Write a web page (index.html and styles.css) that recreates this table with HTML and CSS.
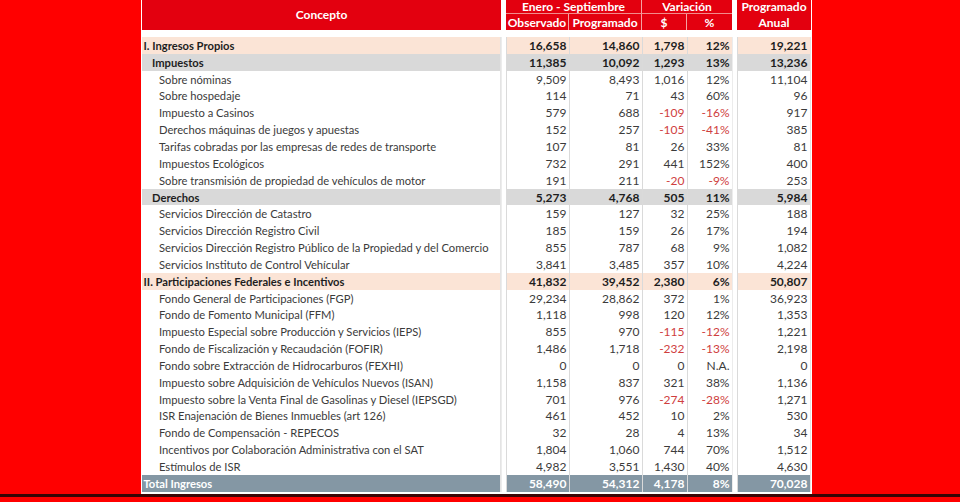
FILE: index.html
```html
<!DOCTYPE html>
<html lang="es">
<head>
<meta charset="utf-8">
<link rel="stylesheet" href="styles.css">
</head>
<body>
<div class="page">
  <div class="frame">
    <div class="head">
      <div class="h-concepto">Concepto</div>
      <i class="gap g1"></i>
      <div class="h-group h-enero">Enero - Septiembre</div>
      <div class="h-group h-var">Variación</div>
      <div class="h-sub h-obs">Observado</div>
      <div class="h-sub h-prog">Programado</div>
      <div class="h-sub h-dol">$</div>
      <div class="h-sub h-pct">%</div>
      <i class="gap g2"></i>
      <div class="h-anual">Programado<br>Anual</div>
    </div>
    <div class="body">
      <div class="row peach bold"><div class="c l0">I. Ingresos Propios</div><i></i><div class="n">16,658</div><div class="n">14,860</div><div class="n">1,798</div><div class="n">12%</div><i></i><div class="n a">19,221</div></div>
      <div class="row grey bold"><div class="c l1">Impuestos</div><i></i><div class="n">11,385</div><div class="n">10,092</div><div class="n">1,293</div><div class="n">13%</div><i></i><div class="n a">13,236</div></div>
      <div class="row"><div class="c l2">Sobre nóminas</div><i></i><div class="n">9,509</div><div class="n">8,493</div><div class="n">1,016</div><div class="n">12%</div><i></i><div class="n a">11,104</div></div>
      <div class="row"><div class="c l2">Sobre hospedaje</div><i></i><div class="n">114</div><div class="n">71</div><div class="n">43</div><div class="n">60%</div><i></i><div class="n a">96</div></div>
      <div class="row"><div class="c l2">Impuesto a Casinos</div><i></i><div class="n">579</div><div class="n">688</div><div class="n neg">-109</div><div class="n neg">-16%</div><i></i><div class="n a">917</div></div>
      <div class="row"><div class="c l2">Derechos máquinas de juegos y apuestas</div><i></i><div class="n">152</div><div class="n">257</div><div class="n neg">-105</div><div class="n neg">-41%</div><i></i><div class="n a">385</div></div>
      <div class="row"><div class="c l2">Tarifas cobradas por las empresas de redes de transporte</div><i></i><div class="n">107</div><div class="n">81</div><div class="n">26</div><div class="n">33%</div><i></i><div class="n a">81</div></div>
      <div class="row"><div class="c l2">Impuestos Ecológicos</div><i></i><div class="n">732</div><div class="n">291</div><div class="n">441</div><div class="n">152%</div><i></i><div class="n a">400</div></div>
      <div class="row"><div class="c l2">Sobre transmisión de propiedad de vehículos de motor</div><i></i><div class="n">191</div><div class="n">211</div><div class="n neg">-20</div><div class="n neg">-9%</div><i></i><div class="n a">253</div></div>
      <div class="row grey bold"><div class="c l1">Derechos</div><i></i><div class="n">5,273</div><div class="n">4,768</div><div class="n">505</div><div class="n">11%</div><i></i><div class="n a">5,984</div></div>
      <div class="row"><div class="c l2">Servicios Dirección de Catastro</div><i></i><div class="n">159</div><div class="n">127</div><div class="n">32</div><div class="n">25%</div><i></i><div class="n a">188</div></div>
      <div class="row"><div class="c l2">Servicios Dirección Registro Civil</div><i></i><div class="n">185</div><div class="n">159</div><div class="n">26</div><div class="n">17%</div><i></i><div class="n a">194</div></div>
      <div class="row"><div class="c l2">Servicios Dirección Registro Público de la Propiedad y del Comercio</div><i></i><div class="n">855</div><div class="n">787</div><div class="n">68</div><div class="n">9%</div><i></i><div class="n a">1,082</div></div>
      <div class="row"><div class="c l2">Servicios Instituto de Control Vehícular</div><i></i><div class="n">3,841</div><div class="n">3,485</div><div class="n">357</div><div class="n">10%</div><i></i><div class="n a">4,224</div></div>
      <div class="row peach bold"><div class="c l0">II. Participaciones Federales e Incentivos</div><i></i><div class="n">41,832</div><div class="n">39,452</div><div class="n">2,380</div><div class="n">6%</div><i></i><div class="n a">50,807</div></div>
      <div class="row"><div class="c l2">Fondo General de Participaciones (FGP)</div><i></i><div class="n">29,234</div><div class="n">28,862</div><div class="n">372</div><div class="n">1%</div><i></i><div class="n a">36,923</div></div>
      <div class="row"><div class="c l2">Fondo de Fomento Municipal (FFM)</div><i></i><div class="n">1,118</div><div class="n">998</div><div class="n">120</div><div class="n">12%</div><i></i><div class="n a">1,353</div></div>
      <div class="row"><div class="c l2">Impuesto Especial sobre Producción y Servicios (IEPS)</div><i></i><div class="n">855</div><div class="n">970</div><div class="n neg">-115</div><div class="n neg">-12%</div><i></i><div class="n a">1,221</div></div>
      <div class="row"><div class="c l2">Fondo de Fiscalización y Recaudación (FOFIR)</div><i></i><div class="n">1,486</div><div class="n">1,718</div><div class="n neg">-232</div><div class="n neg">-13%</div><i></i><div class="n a">2,198</div></div>
      <div class="row"><div class="c l2">Fondo sobre Extracción de Hidrocarburos (FEXHI)</div><i></i><div class="n">0</div><div class="n">0</div><div class="n">0</div><div class="n">N.A.</div><i></i><div class="n a">0</div></div>
      <div class="row"><div class="c l2">Impuesto sobre Adquisición de Vehículos Nuevos (ISAN)</div><i></i><div class="n">1,158</div><div class="n">837</div><div class="n">321</div><div class="n">38%</div><i></i><div class="n a">1,136</div></div>
      <div class="row"><div class="c l2">Impuesto sobre la Venta Final de Gasolinas y Diesel (IEPSGD)</div><i></i><div class="n">701</div><div class="n">976</div><div class="n neg">-274</div><div class="n neg">-28%</div><i></i><div class="n a">1,271</div></div>
      <div class="row"><div class="c l2">ISR Enajenación de Bienes Inmuebles (art 126)</div><i></i><div class="n">461</div><div class="n">452</div><div class="n">10</div><div class="n">2%</div><i></i><div class="n a">530</div></div>
      <div class="row"><div class="c l2">Fondo de Compensación - REPECOS</div><i></i><div class="n">32</div><div class="n">28</div><div class="n">4</div><div class="n">13%</div><i></i><div class="n a">34</div></div>
      <div class="row"><div class="c l2">Incentivos por Colaboración Administrativa con el SAT</div><i></i><div class="n">1,804</div><div class="n">1,060</div><div class="n">744</div><div class="n">70%</div><i></i><div class="n a">1,512</div></div>
      <div class="row"><div class="c l2">Estímulos de ISR</div><i></i><div class="n">4,982</div><div class="n">3,551</div><div class="n">1,430</div><div class="n">40%</div><i></i><div class="n a">4,630</div></div>
      <div class="row total bold"><div class="c l0">Total Ingresos</div><i></i><div class="n">58,490</div><div class="n">54,312</div><div class="n">4,178</div><div class="n">8%</div><i></i><div class="n a">70,028</div></div>
    </div>
  </div>
  <div class="bottom-line"></div>
</div>
</body>
</html>
```
FILE: styles.css
```css
* { box-sizing: border-box; }
html, body { margin: 0; padding: 0; }
body {
  background: #ff0000;
  font-family: Lato, "Open Sans", sans-serif;
  width: 960px;
  height: 502px;
  overflow: hidden;
}
.page { display: flex; flex-direction: column; }
.frame {
  margin-left: 141px;
  width: 671px;
  height: 494px;
  background: #fff;
  padding: 0 1px;
}
.head {
  display: grid;
  grid-template-columns: 359px 5px 63px 73px 45px 45px 5px 74px;
  grid-template-rows: 14px 16px;
  color: #fff;
  font-weight: 700;
  font-size: 12px;
}
.head > div { background: #e3000f; display: flex; align-items: center; justify-content: center; }
.h-concepto { grid-column: 1; grid-row: 1 / 3; padding-bottom: 2px; }
.g1 { grid-column: 2; grid-row: 1 / 3; }
.h-enero { grid-column: 3 / 5; grid-row: 1; border-bottom: 1px solid #f28b8b; border-right: 1px solid #f4a3a3; }
.h-var { grid-column: 5 / 7; grid-row: 1; border-bottom: 1px solid #f28b8b; }
.h-sub { grid-row: 2; }
.h-obs { grid-column: 3; border-right: 1px solid #f4a3a3; }
.h-prog { grid-column: 4; border-right: 1px solid #f4a3a3; }
.h-dol { grid-column: 5; border-right: 1px solid #f4a3a3; }
.h-pct { grid-column: 6; }
.g2 { grid-column: 7; grid-row: 1 / 3; }
.head > .h-anual { grid-column: 8; grid-row: 1 / 3; text-align: center; line-height: 16px; padding-bottom: 1px; }

.body { margin-top: 7px; }
.row {
  display: grid;
  grid-template-columns: 359px 5px 63px 73px 45px 45px 5px 74px;
  height: 16.85px;
  font-size: 11.2px;
  color: #3b3b3b;
}
.row > div { display: flex; align-items: center; white-space: nowrap; }
.row > i { display: block; border-left: 1px solid #ececec; }
.c { border-right: 1px solid #e4e4e4; }
.n { justify-content: flex-end; padding-right: 2.5px; border-left: 1px solid #dadada; font-size: 12px; }
.n.a { border-right: 1px solid #e4e4e4; }
.l0 { padding-left: 1.5px; }
.l1 { padding-left: 10px; }
.l2 { padding-left: 17px; }
.neg { color: #cf3e3e; }
.bold { font-weight: 700; color: #1e1e1e; }
.peach > div { background: #fbe4d6; }
.grey > div { background: #d9d9d9; }
.total > div { background: #8497a4; color: #fff; }
.bottom-line {
  height: 3px;
  background: #3a0505;
}
```
